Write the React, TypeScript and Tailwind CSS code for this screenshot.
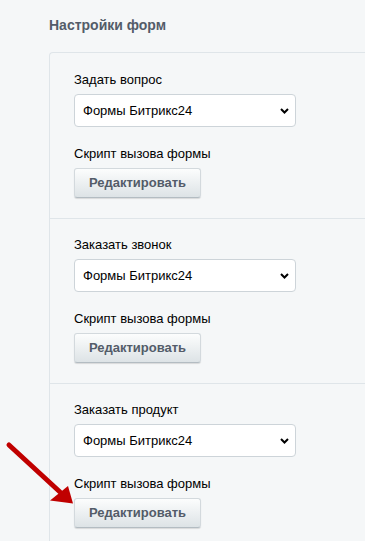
import React from "react";

const font = { fontFamily: '"Liberation Sans", Arial, sans-serif' };

function Chevron() {
  return (
    <svg width="9" height="6" viewBox="0 0 9 6" className="absolute right-[6px] top-[13px]">
      <path d="M1 1 L4.5 4.5 L8 1" fill="none" stroke="#000" strokeWidth="2" />
    </svg>
  );
}

function Section({ label, first }: { label: string; first?: boolean }) {
  return (
    <div className={`pl-[24px] pb-[20px] ${first ? "pt-[19px]" : "pt-[18px] border-t border-[#dfe5e9]"}`}>
      <div className="text-[13px] leading-4 text-[#000]">{label}</div>
      <div className="relative mt-[6px] w-[222px] h-[33px] bg-white border border-[#cdd4d9] rounded-[4px] flex items-center pl-[8px] text-[13px] text-[#000]">
        Формы Битрикс24
        <Chevron />
      </div>
      <div className="mt-[19px] text-[13px] leading-4 text-[#000]">Скрипт вызова формы</div>
      <div className="mt-[6px] w-[127px] h-[30px] rounded-[3px] border border-[#d3d9dd] border-b-[#b3bcc2] bg-gradient-to-b from-[#fcfdfd] to-[#dde3e6] shadow-[0_1px_1px_rgba(0,0,0,0.12)] flex items-center justify-center text-[13px] font-bold text-[#535c69]">
        Редактировать
      </div>
    </div>
  );
}

export default function App() {
  return (
    <div className="relative w-[365px] h-[541px] overflow-hidden bg-[#f5f7f8]" style={font}>
      <div className="pl-[49px] pt-[17px] text-[14px] leading-4 font-bold text-[#535c69]">Настройки форм</div>
      <div className="ml-[49px] mt-[19px] w-[340px] border-l border-t border-[#dfe5e9] rounded-tl-[4px] bg-[#f5f7f8]">
        <Section label="Задать вопрос" first />
        <Section label="Заказать звонок" />
        <Section label="Заказать продукт" />
      </div>
      <svg className="absolute left-0 top-[430px]" width="80" height="80" viewBox="0 430 80 80">
        <path d="M9 445 L60 492" stroke="#c00000" strokeWidth="5" strokeLinecap="round" />
        <path d="M73 503.5 L50 500.5 L68 486 Z" fill="#c00000" />
      </svg>
    </div>
  );
}
